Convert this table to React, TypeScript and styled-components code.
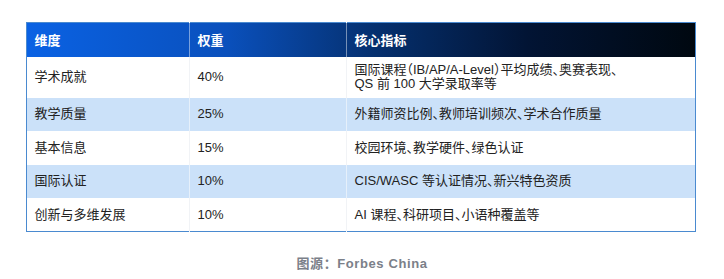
import React from "react";
import styled, { createGlobalStyle } from "styled-components";

const GlobalStyle = createGlobalStyle`
  body {
    margin: 0;
    background: #ffffff;
    font-family: "Liberation Sans", "Noto Sans CJK SC", sans-serif;
  }
`;

const rows = [
  { dim: "学术成就", weight: "40%", kpi: ["国际课程（IB/AP/A-Level）平均成绩、奥赛表现、", "QS 前 100 大学录取率等"] },
  { dim: "教学质量", weight: "25%", kpi: ["外籍师资比例、教师培训频次、学术合作质量"] },
  { dim: "基本信息", weight: "15%", kpi: ["校园环境、教学硬件、绿色认证"] },
  { dim: "国际认证", weight: "10%", kpi: ["CIS/WASC 等认证情况、新兴特色资质"] },
  { dim: "创新与多维发展", weight: "10%", kpi: ["AI 课程、科研项目、小语种覆盖等"] },
];

function App() {
  return (
    <Page>
      <GlobalStyle />
      <Table>
        <colgroup>
          <col style={{ width: 163 }} />
          <col style={{ width: 157 }} />
          <col />
        </colgroup>
        <thead>
          <HeadRow>
            <Th>维度</Th>
            <Th>权重</Th>
            <Th>核心指标</Th>
          </HeadRow>
        </thead>
        <tbody>
          {rows.map((r, i) => (
            <Row key={r.dim} alt={i % 2 === 1}>
              <Td alt={i % 2 === 1}>{r.dim}</Td>
              <Td alt={i % 2 === 1}>{r.weight}</Td>
              <Td alt={i % 2 === 1}>
                {r.kpi.map((line) => (
                  <Line key={line}>{line}</Line>
                ))}
              </Td>
            </Row>
          ))}
        </tbody>
      </Table>
      <Caption>图源：Forbes China</Caption>
    </Page>
  );
}

const Page = styled.div`
  width: 724px;
  height: 279px;
  padding-top: 22px;
  box-sizing: border-box;
  display: flex;
  flex-direction: column;
  align-items: center;
`;

const Table = styled.table`
  width: 670px;
  margin-left: -3px;
  border-collapse: collapse;
  border: 1px solid #4a8ad0;
  table-layout: fixed;
  font-size: 13px;
  color: #222222;
`;

const HeadRow = styled.tr`
  height: 34px;
  background: linear-gradient(90deg, #0a62e4 0%, #0a50bc 30%, #05306f 52%, #021434 75%, #000810 100%);
`;

const Th = styled.th`
  padding: 0 8px;
  text-align: left;
  color: #ffffff;
  font-weight: 700;
  font-size: 13px;
  border-right: 1px solid rgba(255, 255, 255, 0.45);
  &:last-child {
    border-right: none;
  }
`;

const Row = styled.tr<{ alt: boolean }>`
  height: 33.5px;
  background: ${(p) => (p.alt ? "#cbe1f9" : "#ffffff")};
`;

const Td = styled.td<{ alt: boolean }>`
  padding: 6.5px 8px;
  line-height: 14px;
  vertical-align: middle;
  font-feature-settings: "halt";
  border-right: 1px solid ${(p) => (p.alt ? "#e6f0fb" : "#f1f3f6")};
  &:last-child {
    border-right: none;
  }
`;

const Line = styled.div`
  white-space: nowrap;
`;

const Caption = styled.div`
  margin-top: 21px;
  font-size: 13px;
  font-weight: 700;
  color: #7b8089;
  letter-spacing: 0.6px;
`;

export default App;
